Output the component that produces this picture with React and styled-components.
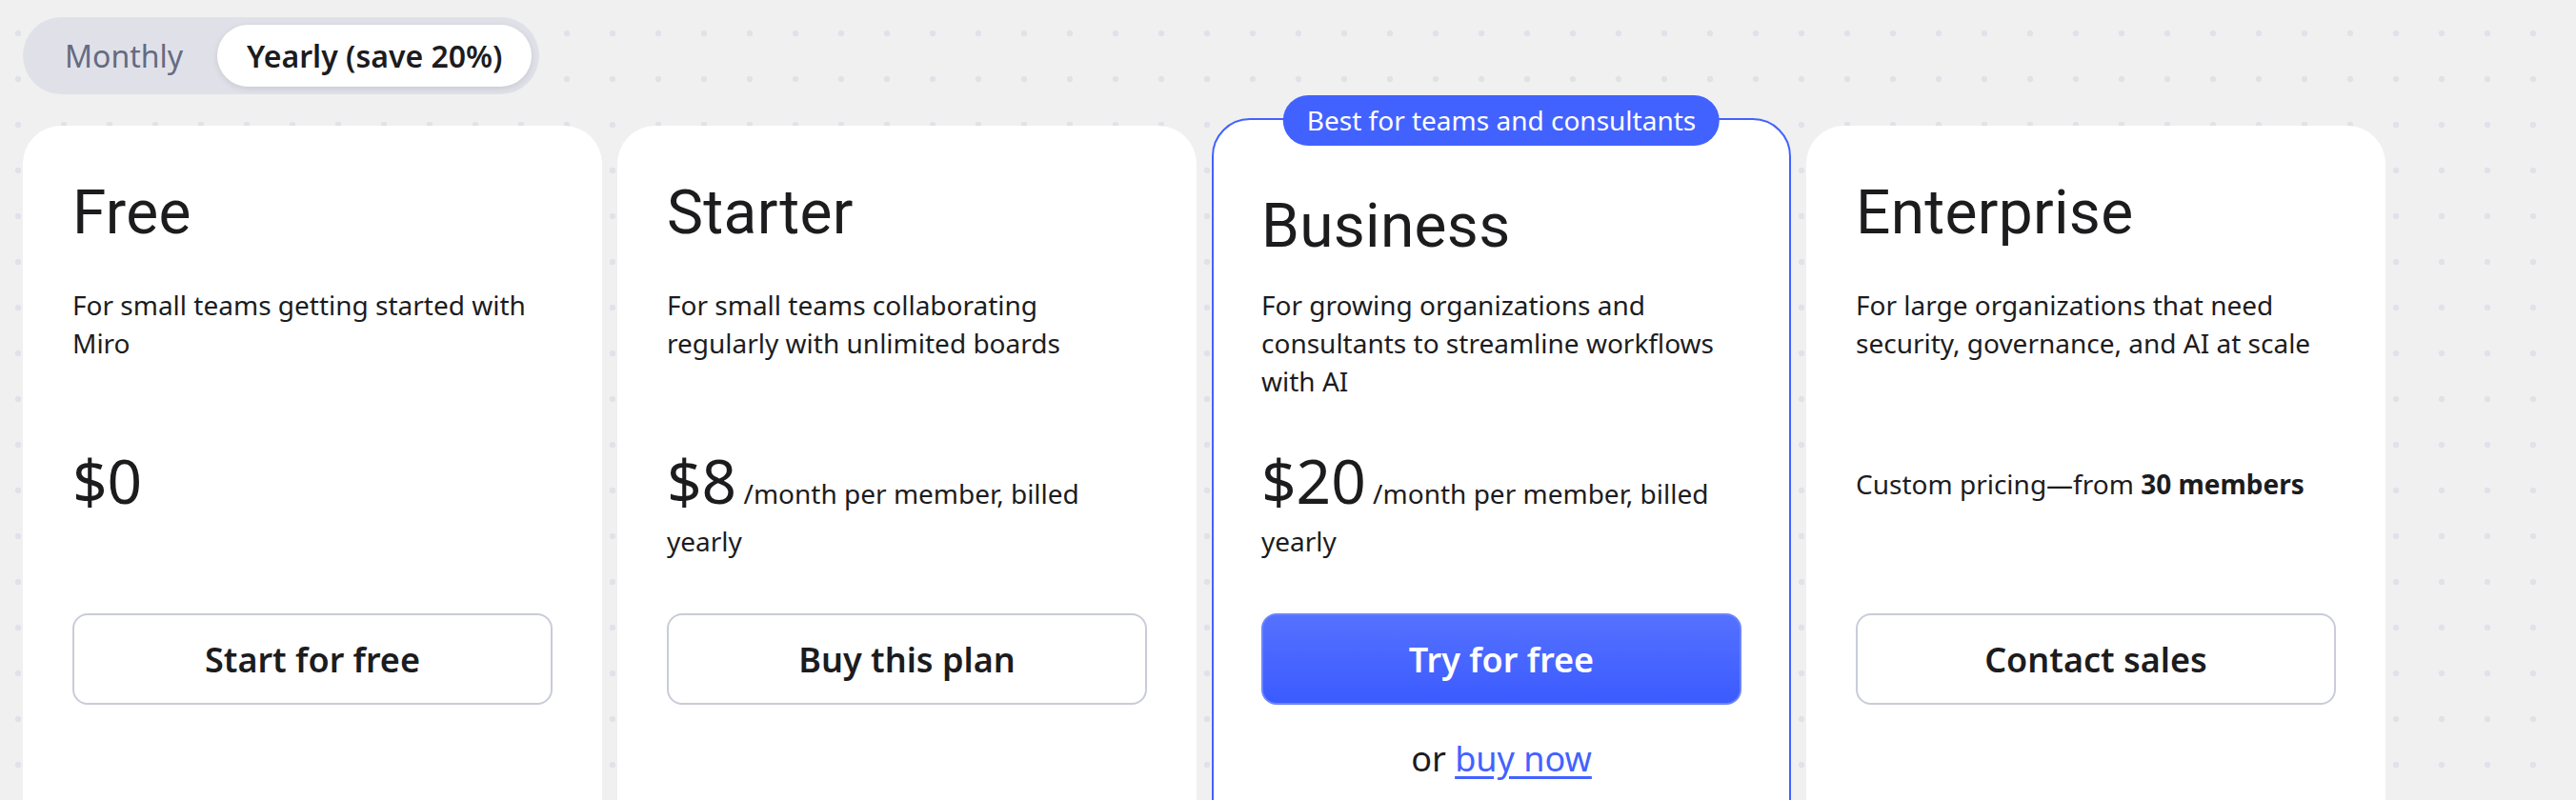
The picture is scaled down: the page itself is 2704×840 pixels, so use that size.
import React from 'react'
import styled, { createGlobalStyle } from 'styled-components'

const GlobalStyle = createGlobalStyle`
  html, body {
    margin: 0;
    overflow: hidden;
  }
  body {
    background-color: #f0f0f0;
    background-image: radial-gradient(circle, #e1e2e9 3px, transparent 3.6px);
    background-size: 48px 48px;
    background-position: -5px 11px;
    font-family: "Noto Sans", "Open Sans", sans-serif;
    color: #1c1c1e;
  }
`

const Page = styled.main`
  display: flex;
  flex-direction: column;
  align-items: flex-start;
  gap: 33px;
  padding: 18px 24px 0;
  height: 840px;
  box-sizing: border-box;
`

const BillingToggle = styled.div`
  display: inline-flex;
  padding: 8px;
  border-radius: 999px;
  background: #e0e1e8;
`

const ToggleOption = styled.button`
  height: 65px;
  padding: 0 ${({ $active }) => ($active ? '31px' : '36px')};
  border: 0;
  border-radius: 999px;
  font-family: "Noto Sans", sans-serif;
  font-size: 32px;
  font-weight: ${({ $active }) => ($active ? 600 : 400)};
  color: ${({ $active }) => ($active ? '#1c1c1e' : '#656b81')};
  background: ${({ $active }) => ($active ? '#ffffff' : 'transparent')};
  box-shadow: ${({ $active }) => ($active ? '0 2px 6px rgba(34, 36, 40, 0.12)' : 'none')};
  cursor: pointer;
`

const Plans = styled.div`
  display: grid;
  grid-template-columns: repeat(4, 608px);
  column-gap: 16px;
  align-items: start;
`

const Card = styled.section`
  position: relative;
  box-sizing: border-box;
  min-height: ${({ $featured }) => ($featured ? '800px' : '792px')};
  margin-top: ${({ $featured }) => ($featured ? '-8px' : '0')};
  padding: ${({ $featured }) => ($featured ? '74px 50px 0' : '54px 52px 0')};
  border: ${({ $featured }) => ($featured ? '2px solid #4262ff' : 'none')};
  border-radius: 40px;
  background: #ffffff;
`

const Badge = styled.div`
  position: absolute;
  top: -26px;
  left: 50%;
  transform: translateX(-50%);
  padding: 8px 25px;
  border-radius: 999px;
  background: #4262ff;
  color: #ffffff;
  font-size: 28px;
  line-height: 37px;
  white-space: nowrap;
`

const PlanName = styled.h2`
  margin: 0 0 ${({ $featured }) => ($featured ? '24px' : '38px')};
  font-family: Roboto, "Liberation Sans", sans-serif;
  font-size: 64px;
  font-weight: 400;
  line-height: 76px;
  letter-spacing: 0.3px;
  color: #1c1c1e;
`

const Description = styled.p`
  height: 120px;
  margin: 0 0 60px;
  font-size: 28px;
  line-height: 40px;
  color: #1c1c1e;
`

const Price = styled.div`
  height: 116px;
  margin-bottom: 48px;
  font-size: 28px;
  line-height: 50px;
  color: #1c1c1e;

  .amount {
    font-size: 64px;
  }

  &.custom {
    padding-top: 3px;
    box-sizing: border-box;
  }

  strong {
    font-weight: 700;
  }
`

const ActionButton = styled.button`
  display: flex;
  align-items: center;
  justify-content: center;
  width: 100%;
  height: 96px;
  box-sizing: border-box;
  border-radius: 16px;
  border: 2px solid ${({ $primary }) => ($primary ? '#6b84ff' : '#c9ccd8')};
  background: ${({ $primary }) =>
    $primary ? 'linear-gradient(180deg, #5571ff 0%, #3b5bff 100%)' : '#ffffff'};
  color: ${({ $primary }) => ($primary ? '#ffffff' : '#1c1c1e')};
  font-family: "Noto Sans", sans-serif;
  font-size: 36px;
  font-weight: 600;
  cursor: pointer;
`

const AltAction = styled.p`
  margin: 33px 0 0;
  text-align: center;
  font-size: 36px;
  line-height: 48px;
  color: #1c1c1e;

  a {
    color: #4262ff;
    text-decoration: underline;
    text-underline-offset: 5px;
  }
`

const plans = [
  {
    name: 'Free',
    description: 'For small teams getting started with Miro',
    amount: '$0',
    action: 'Start for free',
  },
  {
    name: 'Starter',
    description: 'For small teams collaborating regularly with unlimited boards',
    amount: '$8',
    note: '/month per member, billed yearly',
    action: 'Buy this plan',
  },
  {
    name: 'Business',
    description: 'For growing organizations and consultants to streamline workflows with AI',
    amount: '$20',
    note: '/month per member, billed yearly',
    action: 'Try for free',
    featured: true,
    badge: 'Best for teams and consultants',
  },
  {
    name: 'Enterprise',
    description: 'For large organizations that need security, governance, and AI at scale',
    custom: true,
    action: 'Contact sales',
  },
]

const App = () => {
  return (
    <>
      <GlobalStyle />
      <Page>
        <BillingToggle>
          <ToggleOption>Monthly</ToggleOption>
          <ToggleOption $active>Yearly (save 20%)</ToggleOption>
        </BillingToggle>

        <Plans>
          {plans.map(plan => (
            <Card key={plan.name} $featured={plan.featured}>
              {plan.badge && <Badge>{plan.badge}</Badge>}
              <PlanName $featured={plan.featured}>{plan.name}</PlanName>
              <Description>{plan.description}</Description>
              {plan.custom ? (
                <Price className='custom'>
                  Custom pricing—from <strong>30 members</strong>
                </Price>
              ) : (
                <Price>
                  <span className='amount'>{plan.amount}</span>
                  {plan.note && <> {plan.note}</>}
                </Price>
              )}
              <ActionButton $primary={plan.featured}>{plan.action}</ActionButton>
              {plan.featured && (
                <AltAction>
                  or <a href='#buy'>buy now</a>
                </AltAction>
              )}
            </Card>
          ))}
        </Plans>
      </Page>
    </>
  )
}

export default App
